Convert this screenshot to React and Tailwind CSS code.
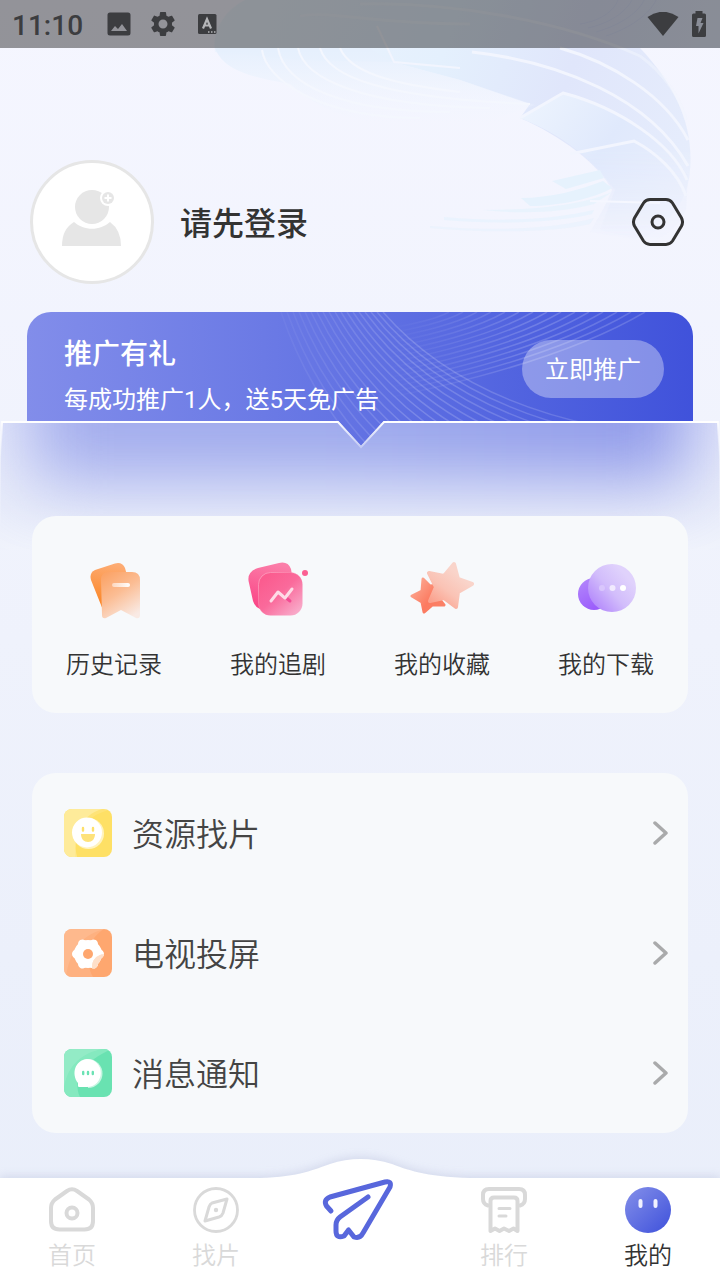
import { useState } from 'react';

const HeroArt = () => (
  <svg className="absolute inset-x-0 top-0 w-full h-[312px] pointer-events-none" viewBox="0 0 720 312" preserveAspectRatio="xMaxYMin slice" fill="none" aria-hidden="true">
    <defs>
      <linearGradient id="wave" x1="220" y1="0" x2="690" y2="180" gradientUnits="userSpaceOnUse">
        <stop offset="0" stopColor="#edf4fe" />
        <stop offset="0.45" stopColor="#e4f0fd" />
        <stop offset="0.7" stopColor="#e0e6fb" />
        <stop offset="1" stopColor="#e6edfc" />
      </linearGradient>
      <linearGradient id="fan" x1="0" y1="50" x2="0" y2="125" gradientUnits="userSpaceOnUse">
        <stop offset="0" stopColor="#e6f0fd" />
        <stop offset="1" stopColor="#f2f6fe" stopOpacity="0" />
      </linearGradient>
      <linearGradient id="leaf" x1="530" y1="90" x2="680" y2="200" gradientUnits="userSpaceOnUse">
        <stop offset="0" stopColor="#edf4fe" />
        <stop offset="0.5" stopColor="#e0e9fc" />
        <stop offset="1" stopColor="#e9eefc" />
      </linearGradient>
      <linearGradient id="fadeDown" x1="0" y1="150" x2="0" y2="240" gradientUnits="userSpaceOnUse">
        <stop offset="0" stopColor="#fff" />
        <stop offset="1" stopColor="#000" />
      </linearGradient>
      <mask id="heroMask" maskUnits="userSpaceOnUse" x="0" y="0" width="720" height="312">
        <rect width="720" height="312" fill="url(#fadeDown)" />
      </mask>
    </defs>
    <g mask="url(#heroMask)">
      <path d="M215 52 C212 30 225 10 245 0 L720 0 L720 48 L640 48 C675 85 694 125 690 170 C688 200 670 225 640 240 L590 232 C600 215 606 205 612 190 C600 165 560 135 520 118 L530 104 L460 80 L392 62 L300 60 Z" fill="url(#wave)" />
    </g>
    <path d="M215 48 C222 66 240 76 290 84 C320 110 350 122 400 126 L507 126 L498 118 L535 105 L460 80 L392 62 L370 48 Z" fill="url(#fan)" />
    <g stroke="#f4f7fe" strokeWidth="2">
      <path d="M262 50 C266 80 320 118 420 118" />
      <path d="M278 48 C284 84 340 112 450 112" />
      <path d="M298 48 C304 78 360 106 490 108" />
      <path d="M320 48 C328 76 380 98 530 104" />
      <path d="M340 48 C350 72 390 84 460 92" />
    </g>
    <g mask="url(#heroMask)">
      <path d="M520 118 L563 93 C610 104 665 140 688 176 L686 210 C678 226 668 236 650 242 L600 230 L615 190 C596 164 570 138 520 118 Z" fill="url(#leaf)" />
    </g>
    <g stroke="#f2f5fe" strokeWidth="3">
      <path d="M300 16 C330 10 370 24 470 24 M360 4 C450 2 560 20 640 56 C665 74 680 98 686 120" opacity="0.5" />
      <path d="M472 52 C560 62 650 98 688 166" />
      <path d="M560 48 C610 62 665 95 688 140" />
      <path d="M520 118 L563 93 C620 108 672 144 687 180" />
      <path d="M570 154 L634 141 C655 152 678 172 686 196" />
      <path d="M377 26 L394 62 L460 68" strokeWidth="2" />
    </g>
    <g fill="#e6f2fd">
      <path d="M552 181 L600 170 L604 178 L566 189 Z" />
      <path d="M521 198 C550 198 580 190 603 181 L612 188 C596 198 560 206 530 206 Z" />
      <path d="M483 210 C530 210 580 206 612 192 L594 204 C560 213 520 214 483 210 Z" opacity="0.8" />
      <path d="M444 217 C500 222 550 220 594 210 L592 214 C550 224 490 224 444 220 Z" opacity="0.7" />
      <path d="M430 226 C500 232 560 228 594 218 L590 224 C550 233 490 233 430 228 Z" opacity="0.5" />
    </g>
    <path d="M590 201 L660 203" stroke="#f5f7ff" strokeWidth="2" />
    <g stroke="#d6defa" strokeWidth="1" opacity="0.6">
      <path d="M580 24 C605 20 615 8 618 0 M588 28 C615 22 628 8 632 0 M596 32 C624 24 640 10 644 0 M606 36 C636 26 652 10 656 0" />
    </g>
  </svg>
);

const lineSteps = Array.from({ length: 18 }, (_, i) => i);

const BannerLines = () => (
  <svg className="absolute inset-0 w-full h-full" viewBox="0 0 666 140" preserveAspectRatio="none" fill="none" aria-hidden="true">
    <defs>
      <linearGradient id="lineFade" x1="240" y1="0" x2="560" y2="0" gradientUnits="userSpaceOnUse">
        <stop offset="0" stopColor="#ffffff" stopOpacity="0.02" />
        <stop offset="0.45" stopColor="#ffffff" stopOpacity="0.18" />
        <stop offset="1" stopColor="#ffffff" stopOpacity="0.14" />
      </linearGradient>
      <linearGradient id="sweepFade" x1="360" y1="0" x2="600" y2="0" gradientUnits="userSpaceOnUse">
        <stop offset="0" stopColor="#ffffff" stopOpacity="0" />
        <stop offset="0.6" stopColor="#ffffff" stopOpacity="0.18" />
        <stop offset="1" stopColor="#ffffff" stopOpacity="0.16" />
      </linearGradient>
    </defs>
    <g strokeWidth="1.5">
      {lineSteps.map((i) => (
        <path key={i} stroke="url(#lineFade)" d={`M${356 - i * 6} 0 Q${430 - i * 8} ${85 + i * 2} ${570 - i * 10} ${114 + i * 5}`} />
      ))}
      {lineSteps.slice(0, 15).map((i) => (
        <path key={i} stroke="url(#sweepFade)" d={`M${618 - i * 14} 0 Q${530 - i * 9} ${52 - i * 3} 350 ${88 - i * 5}`} />
      ))}
    </g>
  </svg>
);

// frosted pocket that covers the lower part of the banner
const GlassPocket = () => (
  <svg className="absolute inset-x-0 top-[108px] w-full h-[130px] pointer-events-none" viewBox="0 0 720 130" preserveAspectRatio="none" fill="none" aria-hidden="true">
    <defs>
      <linearGradient id="glow" x1="0" y1="0" x2="720" y2="0" gradientUnits="userSpaceOnUse">
        <stop offset="0" stopColor="#a5aeed" />
        <stop offset="0.5" stopColor="#9ca8ec" />
        <stop offset="1" stopColor="#8e98e9" />
      </linearGradient>
      <linearGradient id="base" x1="0" y1="0" x2="0" y2="130" gradientUnits="userSpaceOnUse">
        <stop offset="0" stopColor="#e4e8fa" />
        <stop offset="0.65" stopColor="#e9edfa" />
        <stop offset="1" stopColor="#f0f3fc" />
      </linearGradient>
      <linearGradient id="edge" x1="0" y1="0" x2="0" y2="40" gradientUnits="userSpaceOnUse">
        <stop offset="0" stopColor="#ffffff" />
        <stop offset="1" stopColor="#ffffff" stopOpacity="0" />
      </linearGradient>
      <clipPath id="pocket">
        <path d="M1 1 L338 1 L361 26 L384 1 L719 1 L720 130 L0 130 Z" />
      </clipPath>
      <filter id="soft" x="-120" y="-300" width="960" height="560" filterUnits="userSpaceOnUse" colorInterpolationFilters="sRGB">
        <feGaussianBlur stdDeviation="34" />
      </filter>
    </defs>
    <g clipPath="url(#pocket)">
      <rect width="720" height="130" fill="url(#base)" />
      <rect x="32" y="-180" width="656" height="240" fill="url(#glow)" filter="url(#soft)" />
    </g>
    <path d="M0 40 L2 2 L338 2 L361 27 L384 2 L718 2 L720 40" stroke="url(#edge)" strokeWidth="2" />
    <path d="M2 2 L338 2 M384 2 L718 2" stroke="#fff" strokeWidth="2" />
  </svg>
);

const HistoryIcon = () => (
  <svg className="w-16 h-16" viewBox="0 0 64 64" fill="none" aria-hidden="true">
    <defs>
      <linearGradient id="hisBack" x1="30" y1="4" x2="20" y2="50" gradientUnits="userSpaceOnUse">
        <stop stopColor="#fdac74" />
        <stop offset="1" stopColor="#fb8320" />
      </linearGradient>
      <linearGradient id="hisFront" x1="22" y1="16" x2="50" y2="58" gradientUnits="userSpaceOnUse">
        <stop stopColor="#fba468" />
        <stop offset="0.45" stopColor="#fbbd94" />
        <stop offset="1" stopColor="#f9eae4" />
      </linearGradient>
      <linearGradient id="hisBar" x1="30" y1="0" x2="48" y2="0" gradientUnits="userSpaceOnUse">
        <stop stopColor="#fdd8c0" />
        <stop offset="1" stopColor="#fff" />
      </linearGradient>
      <clipPath id="hisClip"><path d="M0 0 H46 V30 H20 V51 H0 Z" /></clipPath>
    </defs>
    <path d="M13 11 L33 4.500 Q40 2.500 43 9 L54 48 L21 51 L9 21 Q7 14 13 11 Z" fill="url(#hisBack)" clipPath="url(#hisClip)" />
    <path d="M19 21 Q19 13 27 13 L50 13 Q58 13 58 21 L58 56 Q58 60 54 59 L39 51 L24 59 Q20 60 20 56 Z" fill="url(#hisFront)" />
    <path d="M32 26 H46" stroke="url(#hisBar)" strokeWidth="4" strokeLinecap="round" />
  </svg>
);

const FollowIcon = () => (
  <svg className="w-16 h-16" viewBox="0 0 64 64" fill="none" aria-hidden="true">
    <defs>
      <linearGradient id="folBack" x1="30" y1="4" x2="16" y2="50" gradientUnits="userSpaceOnUse">
        <stop stopColor="#fb7fa9" />
        <stop offset="1" stopColor="#fa4586" />
      </linearGradient>
      <linearGradient id="folFront" x1="20" y1="18" x2="56" y2="58" gradientUnits="userSpaceOnUse">
        <stop stopColor="#fb5c8f" />
        <stop offset="0.4" stopColor="#fa6a9b" />
        <stop offset="1" stopColor="#f8bad5" />
      </linearGradient>
      <linearGradient id="folRim" x1="14" y1="14" x2="40" y2="40" gradientUnits="userSpaceOnUse">
        <stop stopColor="#fc9bbb" />
        <stop offset="1" stopColor="#fc9bbb" stopOpacity="0" />
      </linearGradient>
    </defs>
    <path d="M12 9 L33 4 Q42 2 45 10 L46 16 L14 50 Q9 48 7 42 L3 24 Q0 13 12 9 Z" fill="url(#folBack)" />
    <rect x="12.500" y="13.500" width="44" height="43" rx="12" fill="url(#folFront)" stroke="url(#folRim)" strokeWidth="1" />
    <path d="M38 37 L44 42" stroke="#f34c94" strokeWidth="3" strokeLinecap="round" />
    <path d="M25 42 L32 33 L39 39 L46 30" stroke="#fedbe7" strokeWidth="3" strokeLinecap="round" strokeLinejoin="round" />
    <circle cx="59" cy="14" r="3" fill="#fb5f92" />
  </svg>
);

const StarsIcon = () => (
  <svg className="w-16 h-16" viewBox="0 0 64 64" fill="none" aria-hidden="true">
    <defs>
      <linearGradient id="starBack" x1="4" y1="24" x2="34" y2="48" gradientUnits="userSpaceOnUse">
        <stop stopColor="#fca992" />
        <stop offset="0.6" stopColor="#fc7a60" />
        <stop offset="1" stopColor="#fa8268" />
      </linearGradient>
      <linearGradient id="starFront" x1="22" y1="44" x2="46" y2="14" gradientUnits="userSpaceOnUse">
        <stop stopColor="#fb9f8b" />
        <stop offset="0.5" stopColor="#fac3b5" />
        <stop offset="1" stopColor="#f9d4ca" />
      </linearGradient>
    </defs>
    <path d="M13 20 L20 27 L31 26 L26 36 L34 46 L22 46 L14 53 L12 43 L2 37 L12 32 Z" fill="url(#starBack)" stroke="url(#starBack)" strokeWidth="3" strokeLinejoin="round" />
    <path d="M44 5 L48 20 L62 25 L48 33 L46 48 L34 39 L20 42 L26 28 L19 14 L34 17 Z" fill="url(#starFront)" stroke="url(#starFront)" strokeWidth="4" strokeLinejoin="round" />
  </svg>
);

const DownloadIcon = () => (
  <svg className="w-16 h-16" viewBox="0 0 64 64" fill="none" aria-hidden="true">
    <defs>
      <linearGradient id="dlBack" x1="8" y1="22" x2="22" y2="50" gradientUnits="userSpaceOnUse">
        <stop stopColor="#b184fb" />
        <stop offset="1" stopColor="#9b5cfb" />
      </linearGradient>
      <linearGradient id="dlFront" x1="18" y1="42" x2="50" y2="14" gradientUnits="userSpaceOnUse">
        <stop stopColor="#b68dfb" />
        <stop offset="0.5" stopColor="#d2bdfb" />
        <stop offset="1" stopColor="#e0d2fc" />
      </linearGradient>
    </defs>
    <circle cx="20" cy="35" r="16" fill="url(#dlBack)" />
    <circle cx="38" cy="29" r="24" fill="url(#dlFront)" />
    <circle cx="28" cy="29" r="3" fill="#d9c6fc" />
    <circle cx="38.500" cy="29" r="3" fill="#f1eafe" />
    <circle cx="49" cy="29" r="3" fill="#fff" />
  </svg>
);

const SearchFaceIcon = () => (
  <svg className="w-12 h-12 rounded-lg" viewBox="0 0 48 48" fill="none" aria-hidden="true">
    <rect width="48" height="48" fill="#fee065" />
    <path d="M0 0 H38 C18 6 8 24 13 48 H0 Z" fill="#fee98d" />
    <path d="M0 0 H48 C24 6 10 20 11 48 H0 Z" fill="#fff" opacity="0.12" />
    <circle cx="24.500" cy="24.500" r="15.500" fill="#fff3c0" />
    <circle cx="23" cy="23.500" r="15" fill="#fff" />
    <path d="M19 19 V21.500 M29 19 V21.500" stroke="#fee06b" strokeWidth="2.400" strokeLinecap="round" />
    <path d="M17 25 H31 C31 30 28 33 24 33 C20 33 17 30 17 25 Z" fill="#fee27a" />
  </svg>
);

const CastIcon = () => (
  <svg className="w-12 h-12 rounded-lg" viewBox="0 0 48 48" fill="none" aria-hidden="true">
    <defs>
      <clipPath id="castGlint"><circle cx="41" cy="38" r="13" /></clipPath>
    </defs>
    <rect width="48" height="48" fill="#fea76f" />
    <path d="M0 0 H40 C22 12 20 30 29 48 H0 Z" fill="#feb587" opacity="0.7" />
    <path d="M0 0 H42 C20 4 6 20 2 48 H0 Z" fill="#fff" opacity="0.1" />
    <g fill="#fff" stroke="#fff" strokeWidth="9" strokeLinecap="round">
      <circle cx="24" cy="25" r="9.500" />
      <path d="M12.500 25 H35.500 M18.500 15 L29.500 35 M29.500 15 L18.500 35" />
    </g>
    <g clipPath="url(#castGlint)" fill="#fedfc9" stroke="#fedfc9" strokeWidth="9" strokeLinecap="round">
      <circle cx="24" cy="25" r="9.500" />
      <path d="M12.500 25 H35.500 M18.500 15 L29.500 35" />
    </g>
    <circle cx="24" cy="25" r="5" fill="#fea76f" />
  </svg>
);

const MessageIcon = () => (
  <svg className="w-12 h-12 rounded-lg" viewBox="0 0 48 48" fill="none" aria-hidden="true">
    <rect width="48" height="48" fill="#69e2b1" />
    <path d="M0 0 H48 C20 12 8 30 16 48 H0 Z" fill="#85e9bf" />
    <path d="M0 0 H38 C18 4 4 16 0 38 Z" fill="#fff" opacity="0.12" />
    <path d="M24 10 A14.500 14.500 0 1 1 24 39 Z" fill="#c6f5e1" />
    <path d="M23 10 A13.800 14 0 1 1 23 38 H15 Q14 38 14 36.500 V34 C7 25 11 11 23 10 Z" fill="#fff" />
    <path d="M19.200 23 V25 M24 23 V25 M28.800 23 V25" stroke="#6be2b4" strokeWidth="2.400" strokeLinecap="round" />
  </svg>
);

const HomeIcon = () => (
  <svg className="w-12 h-12" viewBox="0 0 48 48" fill="none" stroke="#d9d9d9" strokeWidth="4" strokeLinejoin="round" aria-hidden="true">
    <path d="M19 5 Q24 1.500 29 5 L41 13.500 Q45 17 45 22 V35 Q45 43.500 36.500 43.500 H11.500 Q3 43.500 3 35 V22 Q3 17 7 13.500 Z" />
    <circle cx="24" cy="27" r="5.500" />
  </svg>
);

const DiscoverIcon = () => (
  <svg className="w-12 h-12" viewBox="0 0 48 48" fill="none" stroke="#d9d9d9" strokeWidth="3" strokeLinejoin="round" aria-hidden="true">
    <circle cx="24" cy="24" r="21.500" strokeWidth="2.800" />
    <path d="M20 17 L35 13 L31 27 Q30 30 27 31 L13 35 L17 21 Q18 18 20 17 Z" />
    <circle cx="24" cy="24" r="2.200" fill="#d9d9d9" stroke="none" />
  </svg>
);

const RankIcon = () => (
  <svg className="w-12 h-12" viewBox="0 0 48 48" fill="none" stroke="#d9d9d9" strokeWidth="4" strokeLinejoin="round" strokeLinecap="round" aria-hidden="true">
    <path d="M8 19.500 Q3 18 3 13 V9 Q3 3 9 3 H39 Q45 3 45 9 V13 Q45 18 40 19.500" />
    <path d="M10.500 45 V15 Q10.500 11.500 14 11.500 H34 Q37.500 11.500 37.500 15 V45 L33.500 42.500 L29 45 L24 42.500 L19.500 45 L15 42.500 Z" />
    <path d="M19 22.500 H30 M19 30 H26" strokeWidth="3" />
  </svg>
);

const MineIcon = () => (
  <svg className="w-12 h-12" viewBox="0 0 48 48" fill="none" aria-hidden="true">
    <defs>
      <linearGradient id="mine" x1="6" y1="6" x2="42" y2="44" gradientUnits="userSpaceOnUse">
        <stop stopColor="#7d89e8" />
        <stop offset="1" stopColor="#4456dc" />
      </linearGradient>
    </defs>
    <circle cx="24" cy="24" r="23" fill="url(#mine)" />
    <path d="M16.500 15 V20 M31.500 15 V20" stroke="#f1f2ff" strokeWidth="4" strokeLinecap="round" />
  </svg>
);

const PlaneIcon = () => (
  <svg className="w-[72px] h-16 overflow-visible" viewBox="0 0 72 64" fill="none" stroke="#5867dc" strokeWidth="5" strokeLinecap="round" strokeLinejoin="round" aria-hidden="true">
    <path d="M7 33 L2.500 28 Q-1 22 6 19 L61 4 Q68 2.500 66 9 L39 55 Q36 61 30 59 L24.500 52 L20 58 Q12 61 12 53 V47 Q12 42 16 39 L44 19" />
  </svg>
);

const Chevron = () => (
  <svg className="w-4 h-6" viewBox="0 0 16 24" fill="none" stroke="#a9aaab" strokeWidth="3.500" strokeLinecap="round" strokeLinejoin="round" aria-hidden="true">
    <path d="M3 2 L14 12 L3 22" />
  </svg>
);

const shortcuts = [
  { label: '历史记录', Icon: HistoryIcon },
  { label: '我的追剧', Icon: FollowIcon },
  { label: '我的收藏', Icon: StarsIcon },
  { label: '我的下载', Icon: DownloadIcon },
];

const menuItems = [
  { label: '资源找片', Icon: SearchFaceIcon },
  { label: '电视投屏', Icon: CastIcon },
  { label: '消息通知', Icon: MessageIcon },
];

const tabs = [
  { id: 'home', label: '首页', Icon: HomeIcon },
  { id: 'find', label: '找片', Icon: DiscoverIcon },
  { id: 'send', label: '', Icon: PlaneIcon },
  { id: 'rank', label: '排行', Icon: RankIcon },
  { id: 'mine', label: '我的', Icon: MineIcon },
];

const StatusBar = () => (
  <div className="relative h-12 px-3 flex items-center bg-black/40 text-[#3c3d40]">
    <span className="pt-1 text-[28px] leading-8 font-medium">11:10</span>
    <svg className="w-6 h-6 ml-6" viewBox="0 0 24 24" fill="currentColor" aria-hidden="true">
      <path fillRule="evenodd" d="M3 0.500 H21 Q23.500 0.500 23.500 3 V21 Q23.500 23.500 21 23.500 H3 Q0.500 23.500 0.500 21 V3 Q0.500 0.500 3 0.500 Z M4 19 H20 L15 12 L11 17 L8 14 Z" />
    </svg>
    <svg className="w-[30px] h-[30px] ml-[17px]" viewBox="0 0 24 24" fill="currentColor" aria-hidden="true">
      <path d="M19.140 12.940c.04-.3.06-.61.06-.94 0-.32-.02-.64-.07-.94l2.030-1.580c.18-.14.23-.41.12-.61l-1.920-3.320c-.12-.22-.37-.29-.59-.22l-2.390.96c-.5-.38-1.030-.7-1.620-.94l-.36-2.540c-.04-.24-.24-.41-.48-.41h-3.840c-.24 0-.43.17-.47.41l-.36 2.540c-.59.24-1.130.57-1.620.94l-2.390-.96c-.22-.08-.47 0-.59.22L2.740 8.870c-.12.21-.08.47.12.61l2.030 1.580c-.05.3-.09.63-.09.94s.02.64.07.94l-2.030 1.580c-.18.14-.23.41-.12.61l1.920 3.320c.12.22.37.29.59.22l2.390-.96c.5.38 1.030.7 1.620.94l.36 2.540c.05.24.24.41.48.41h3.840c.24 0 .44-.17.47-.41l.36-2.540c.59-.24 1.130-.56 1.620-.94l2.390.96c.22.08.47 0 .59-.22l1.920-3.320c.12-.22.07-.47-.12-.61l-2.010-1.580zM12 15.600c-1.980 0-3.600-1.620-3.600-3.600s1.620-3.600 3.600-3.600 3.600 1.620 3.600 3.600-1.620 3.600-3.600 3.600z" />
    </svg>
    <svg className="w-5 h-5 ml-[19px]" viewBox="0 0 20 20" fill="none" aria-hidden="true">
      <rect x="1" width="18.500" height="20" rx="1.500" fill="currentColor" />
      <path d="M6 14.500 L10 5 L14 14.500 M7.500 11.500 H12.500" stroke="#b4b5b8" strokeWidth="2.200" />
      <path d="M11 18 H12.500 M14 18 H15.500 M17 18 H18.500" stroke="#b4b5b8" strokeWidth="1.500" />
    </svg>
    <svg className="w-8 h-6 ml-auto" viewBox="0 0 32 24" fill="currentColor" aria-hidden="true">
      <path d="M0.500 5 Q16 -5.500 31.500 5 L16 24 Z" />
    </svg>
    <svg className="w-4 h-[26px] ml-3 mr-px" viewBox="0 0 16 26" fill="currentColor" aria-hidden="true">
      <path fillRule="evenodd" d="M4.500 0 H11.500 V2.500 H13.500 Q15 2.500 15 4 V24.500 Q15 26 13.500 26 H2.500 Q1 26 1 24.500 V4 Q1 2.500 2.500 2.500 H4.500 Z M6.500 7 L5 15 H7.500 V22.500 L12.500 12 H9.500 L11.500 7 Z" />
    </svg>
  </div>
);

const App = () => {
  const [activeTab, setActiveTab] = useState('mine');

  return (
    <div className="relative min-h-screen flex flex-col bg-linear-to-b from-[#f5f6ff] via-[#eff2fc] to-[#e9eefa] font-[Roboto,'Noto_Sans_CJK_SC',sans-serif] text-[#333]">
      <HeroArt />
      <StatusBar />

      <header className="relative flex items-center pt-28 pb-7 pl-[30px] pr-9">
        <button aria-label="头像" className="w-[124px] h-[124px] pb-1 rounded-full bg-white border-3 border-[#e6e6e6] flex items-center justify-center">
          <svg className="w-16 h-16" viewBox="0 0 64 64" fill="#e6e6e6" aria-hidden="true">
            <circle cx="32" cy="19" r="17" />
            <path d="M2 58 Q2 41 14 34 C24 43 40 43 50 34 Q61 42 61 58 Z" />
            <circle cx="48" cy="10" r="8" fill="#fff" />
            <circle cx="48" cy="10" r="6" />
            <path d="M48 6.500 V13.500 M44.500 10 H51.500" stroke="#fff" strokeWidth="2" />
          </svg>
        </button>
        <h1 className="ml-[26px] pt-1 text-[32px] leading-10 font-medium">请先登录</h1>
        <button aria-label="设置" className="ml-auto">
          <svg className="w-[52px] h-12" viewBox="0 0 52 48" fill="none" stroke="#333" strokeWidth="3" aria-hidden="true">
            <path d="M18 1.500 H34 Q38 1.500 40.500 5 L49.500 20 Q51.500 24 49.500 28 L40.500 43 Q38 46.500 34 46.500 H18 Q14 46.500 11.500 43 L2.500 28 Q0.500 24 2.500 20 L11.500 5 Q14 1.500 18 1.500 Z" />
            <circle cx="26" cy="24" r="6" />
          </svg>
        </button>
      </header>

      <section className="relative h-[204px]">
        <div className="relative h-[140px] mx-[27px] rounded-t-3xl overflow-hidden bg-linear-to-r from-[#828dea] via-[#6272e3] to-[#4052db] text-white">
          <BannerLines />
          <div className="relative flex items-start justify-between pl-[37px] pr-[29px]">
            <div className="pt-[23px]">
              <h2 className="text-[28px] leading-10 font-medium">推广有礼</h2>
              <p className="mt-[7px] text-2xl leading-9">每成功推广1人，送5天免广告</p>
            </div>
            <button className="mt-7 w-[142px] h-[58px] pt-0.5 rounded-full bg-white/35 text-2xl">立即推广</button>
          </div>
        </div>
        <GlassPocket />
      </section>

      <section className="relative mx-8 h-[197px] pt-[43px] grid grid-cols-4 items-start rounded-3xl bg-[#f7f9fb]">
        {shortcuts.map(({ label, Icon }) => (
          <button key={label} className="flex flex-col items-center gap-6">
            <Icon />
            <span className="text-2xl leading-9 font-[350]">{label}</span>
          </button>
        ))}
      </section>

      <section className="relative mx-8 mt-[60px] rounded-3xl bg-[#f7f9fb]">
        {menuItems.map(({ label, Icon }) => (
          <button key={label} className="w-full h-[120px] pl-8 pr-5 flex items-center text-[#444]">
            <Icon />
            <span className="ml-5 pt-1 text-[32px] leading-10 font-[350]">{label}</span>
            <span className="ml-auto"><Chevron /></span>
          </button>
        ))}
      </section>

      <nav className="relative mt-auto h-[102px]">
        <svg className="absolute inset-x-0 bottom-0 w-full h-[122px] overflow-visible drop-shadow-[0_-2px_4px_rgba(120,130,180,0.2)]" viewBox="0 0 720 122" preserveAspectRatio="none" aria-hidden="true">
          <path d="M0 20 H260 C300 19 315 11 330 6 Q360 -4 392 6 C405 11 425 19 470 20 H720 V122 H0 Z" fill="#fff" />
        </svg>
        <div className="relative grid grid-cols-5">
          {tabs.map(({ id, label, Icon }) => (
            <button
              key={id}
              aria-label={label || '分享'}
              aria-current={activeTab === id ? 'page' : undefined}
              onClick={() => setActiveTab(id)}
              className={`flex flex-col items-center ${label ? 'pt-2' : ''} ${activeTab === id ? 'text-[#333]' : 'text-[#d9d9d9]'}`}
            >
              <Icon />
              {label && <span className="mt-1 text-2xl leading-9 font-[350]">{label}</span>}
            </button>
          ))}
        </div>
      </nav>
    </div>
  );
};

export default App;
